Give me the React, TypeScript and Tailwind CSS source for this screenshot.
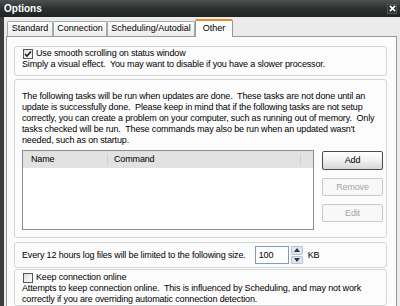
import React from "react"

const font = { fontFamily: '"Liberation Sans", Arial, sans-serif' }

function Checkbox({ checked }: { checked?: boolean }) {
  return (
    <span className="flex h-[10px] w-[10px] shrink-0 items-center justify-center border border-[#4a5a6a] bg-linear-to-br from-[#dcdcd6] to-white">
      {checked && (
        <svg width="8" height="8" viewBox="0 0 8 8">
          <path d="M1 4 L3 6 L7 1.5" fill="none" stroke="#1e1e1e" strokeWidth="1.6" />
        </svg>
      )}
    </span>
  )
}

function Tab({ label, width, active }: { label: string; width: string; active?: boolean }) {
  if (active) {
    return (
      <div
        className={`${width} relative -mb-[1px] flex h-[18px] items-center justify-center rounded-t-[2px] border border-b-0 border-[#919b9c] border-t-[#e68b2c] border-t-2 bg-[#fcfcfc] text-[9px] text-black`}
      >
        {label}
      </div>
    )
  }
  return (
    <div
      className={`${width} flex h-[15px] items-center justify-center rounded-t-[2px] border border-b-0 border-[#a4a9aa] bg-linear-to-b from-white to-[#ececec] text-[9px] text-black`}
    >
      {label}
    </div>
  )
}

function Group({ className, children }: { className?: string; children: React.ReactNode }) {
  return (
    <div className={`rounded-[3px] border border-[#d6d6d6] ${className ?? ""}`}>{children}</div>
  )
}

function Btn({ label, disabled }: { label: string; disabled?: boolean }) {
  return (
    <div
      className={
        disabled
          ? "flex h-[18px] w-[61px] items-center justify-center rounded-[2px] border border-[#c9c9c9] bg-[#f8f8f8] text-[9px] text-[#a6a6a6]"
          : "flex h-[19px] w-[61px] items-center justify-center rounded-[2px] border border-[#4b4b4b] bg-linear-to-b from-white via-[#f0f0f0] to-[#d6d6d6] text-[9px] text-black"
      }
    >
      {label}
    </div>
  )
}

export default function App() {
  return (
    <div className="flex h-[306px] w-[400px] flex-col overflow-hidden bg-[#ebebeb] text-black" style={font}>
      {/* title bar */}
      <div className="flex h-[17px] shrink-0 items-center justify-between bg-linear-to-b from-[#4b524f] via-[#2d3230] to-[#1f2321] pl-[4px] pr-[3px]">
        <span className="text-[10px] font-bold text-white">Options</span>
        <span className="flex h-[10px] w-[10px] items-center justify-center border border-[#555] bg-[#2a2e2c]">
          <svg width="7" height="7" viewBox="0 0 8 8">
            <path d="M1 1 L7 7 M7 1 L1 7" stroke="#ffffff" strokeWidth="2" />
          </svg>
        </span>
      </div>

      <div className="flex min-h-0 flex-1">
        <div className="w-[4px] shrink-0 bg-[#3b3d3c]" />
        <div className="flex min-w-0 flex-1 flex-col pl-[2px] pr-[3px]">
          {/* tabs */}
          <div className="flex h-[19px] shrink-0 items-end pl-[1px]">
            <Tab label="Standard" width="w-[46px]" />
            <Tab label="Connection" width="w-[54px]" />
            <Tab label="Scheduling/Autodial" width="w-[88px]" />
            <Tab label="Other" width="w-[38px]" active />
          </div>

          {/* panel */}
          <div className="flex min-h-0 flex-1 flex-col border border-b-0 border-[#919b9c] bg-[#fcfcfc] pl-[7px] pr-[9px] pt-[9px] text-[9px] leading-[11px] tracking-[-0.15px]">
            <Group className="pb-[5px] pl-[7px] pt-[1px]">
              <div className="flex h-[11px] items-center gap-[3px] pl-[1px]">
                <Checkbox checked />
                <span>Use smooth scrolling on status window</span>
              </div>
              <div>Simply a visual effect.&nbsp; You may want to disable if you have a slower processor.</div>
            </Group>

            <Group className="mt-[3px] pb-[7px] pl-[7px] pr-[3px] pt-[11px]">
              <div className="whitespace-nowrap">
                <div>The following tasks will be run when updates are done.&nbsp; These tasks are not done until an</div>
                <div>update is successfully done.&nbsp; Please keep in mind that if the following tasks are not setup</div>
                <div>correctly, you can create a problem on your computer, such as running out of memory.&nbsp; Only</div>
                <div>tasks checked will be run.&nbsp; These commands may also be run when an updated wasn't</div>
                <div>needed, such as on startup.</div>
              </div>
              <div className="mt-[4px] flex gap-[8px]">
                <div className="flex h-[80px] w-[293px] flex-col border border-[#8c8c8c] bg-white">
                  <div className="flex h-[17px] items-center bg-[#e2e2e2] text-[9px]">
                    <span className="w-[85px] border-r border-[#cfcfcf] pl-[8px]">Name</span>
                    <span className="w-[193px] border-r border-[#cfcfcf] pl-[6px]">Command</span>
                  </div>
                </div>
                <div className="flex flex-col gap-[8px] pt-[1px]">
                  <Btn label="Add" />
                  <Btn label="Remove" disabled />
                  <Btn label="Edit" disabled />
                </div>
              </div>
            </Group>

            <Group className="mt-[4px] flex h-[28px] items-center pl-[7px]">
              <span>Every 12 hours log files will be limited to the following size.</span>
              <div className="ml-[9px] flex h-[18px] w-[34px] items-center border border-[#7f9db9] bg-white pl-[3px]">
                100
              </div>
              <div className="ml-[2px] flex h-[18px] w-[12px] flex-col gap-[1px]">
                <span className="flex flex-1 items-center justify-center rounded-[1px] border border-[#b8c4d6] bg-[#dfe6f2]">
                  <svg width="6" height="4" viewBox="0 0 6 4">
                    <path d="M0 4 L3 0 L6 4 Z" fill="#333" />
                  </svg>
                </span>
                <span className="flex flex-1 items-center justify-center rounded-[1px] border border-[#b8c4d6] bg-[#dfe6f2]">
                  <svg width="6" height="4" viewBox="0 0 6 4">
                    <path d="M0 0 L3 4 L6 0 Z" fill="#333" />
                  </svg>
                </span>
              </div>
              <span className="ml-[5px]">KB</span>
            </Group>

            <Group className="mt-[1px] flex-1 pl-[7px] pt-[2px]">
              <div className="flex h-[11px] items-center gap-[3px] pl-[1px]">
                <Checkbox />
                <span>Keep connection online</span>
              </div>
              <div>Attempts to keep connection online.&nbsp; This is influenced by Scheduling, and may not work</div>
              <div>correctly if you are overriding automatic connection detection.</div>
            </Group>
          </div>
        </div>
      </div>
    </div>
  )
}
